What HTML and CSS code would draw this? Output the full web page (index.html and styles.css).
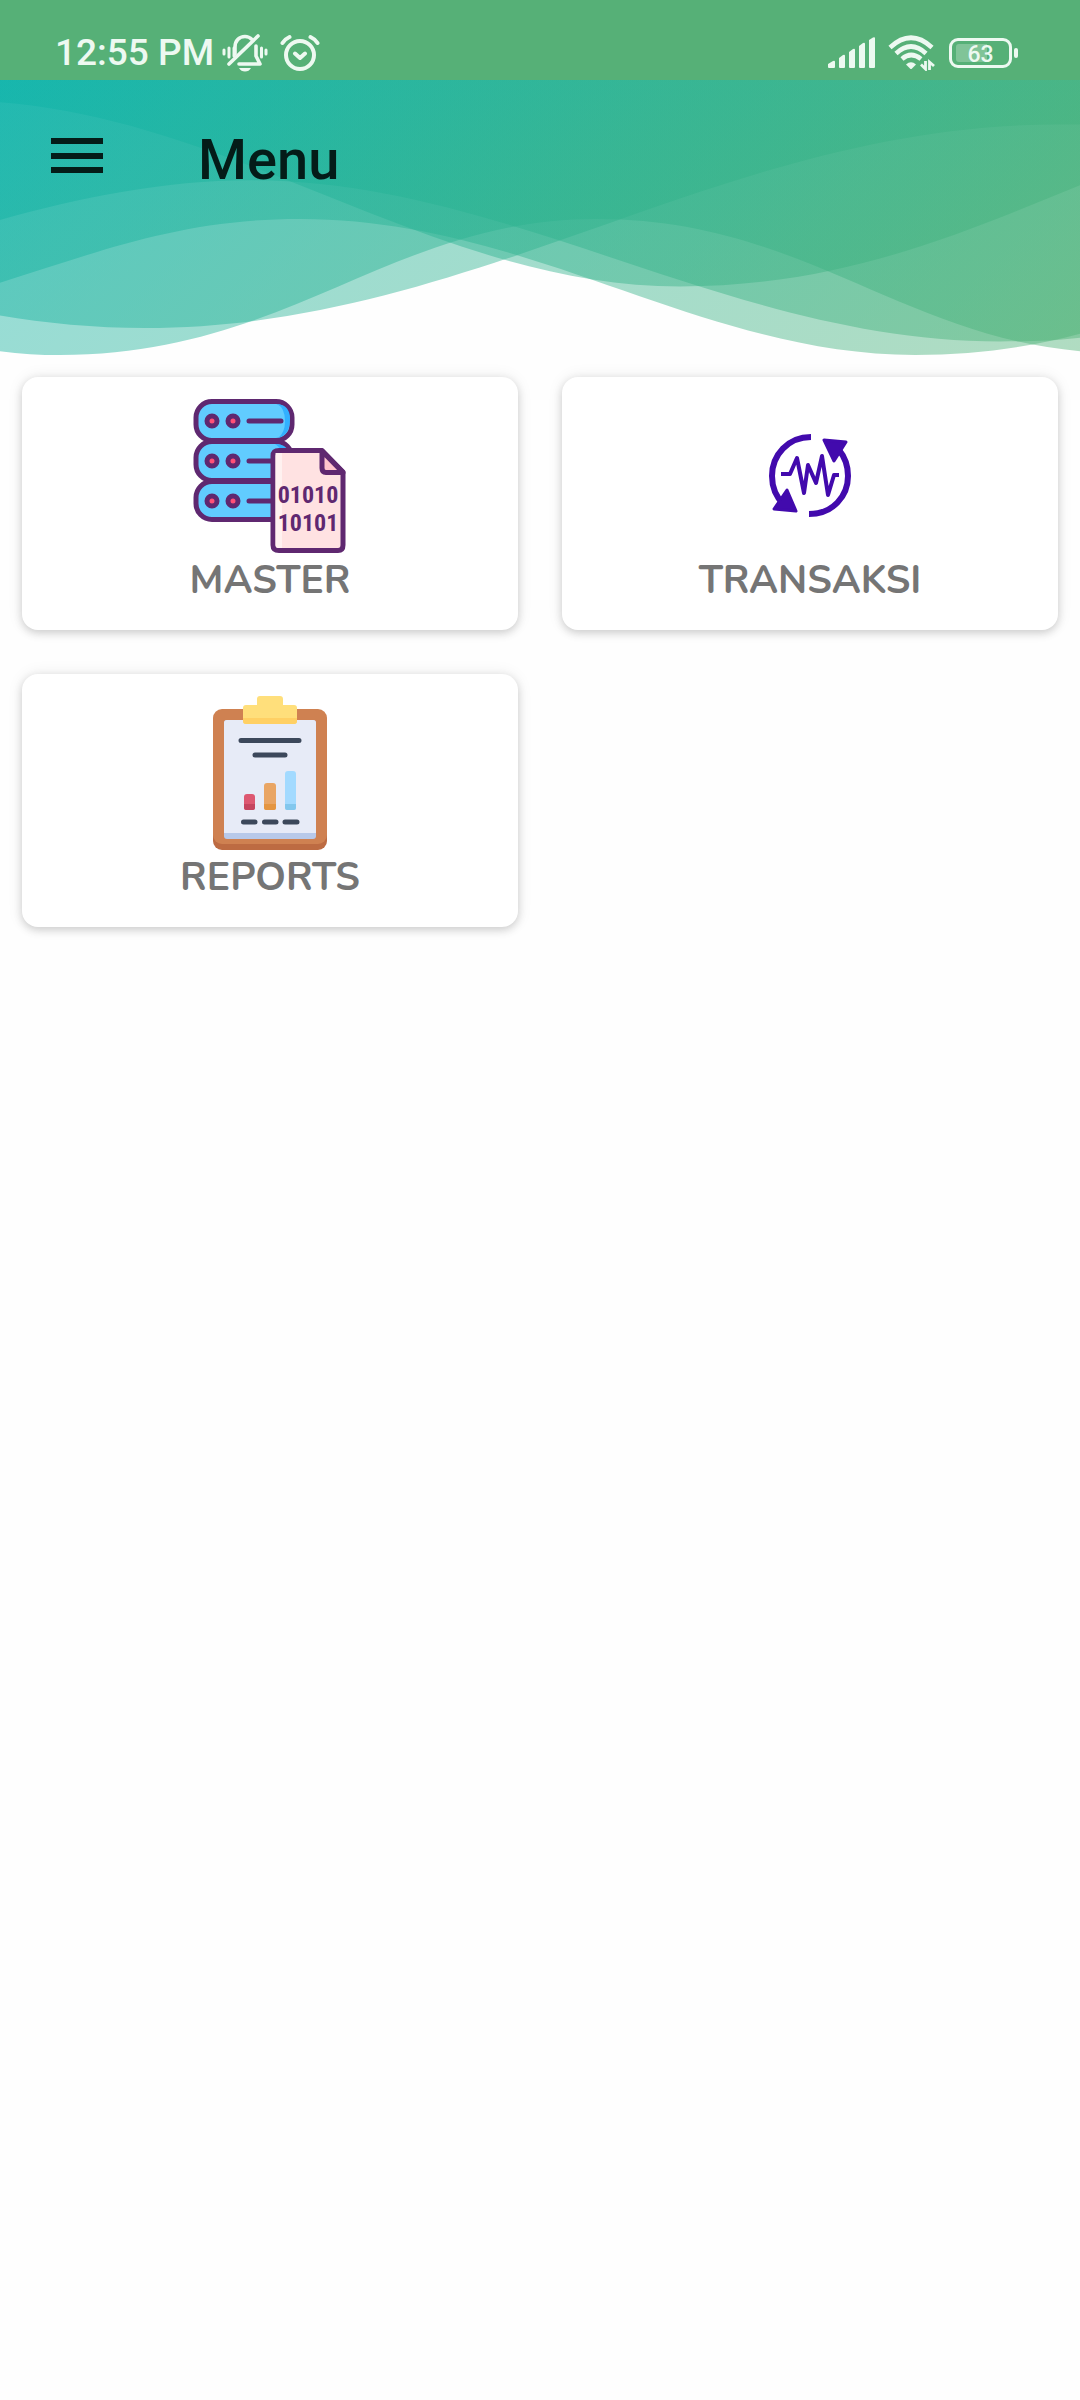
FILE: index.html
```html
<!DOCTYPE html>
<html lang="id">
<head>
<meta charset="utf-8">
<meta name="viewport" content="width=device-width, initial-scale=1">
<title>Menu</title>
<link rel="stylesheet" href="styles.css">
</head>
<body>
<div class="status-bar">
  <div class="status-group">
    <span class="clock">12:55 PM</span>
    <svg class="icon-bell" viewBox="0 0 46 40" aria-hidden="true">
      <g fill="none" stroke="currentColor" stroke-width="3.6" stroke-linecap="round" stroke-linejoin="round">
        <path d="M13 21V14C13 8 17 3.500 23 3.500C25.500 3.500 28 4.500 30 6.500"/>
        <path d="M34 13V23L38 31H17"/>
        <path d="M7 31L36 3"/>
        <path stroke-width="3" d="M2 17V21M7 15V24M39.500 15V24M44 17V21"/>
        <path stroke-width="3" d="M12 15V23"/>
      </g>
      <path d="M17 35H29Q27 38.500 23 38.500Q19 38.500 17 35Z" fill="currentColor"/>
    </svg>
    <svg class="icon-alarm" viewBox="0 0 40 40" aria-hidden="true">
      <g fill="none" stroke="currentColor" stroke-width="4" stroke-linecap="round" stroke-linejoin="round">
        <circle cx="20" cy="22" r="14"/>
        <path d="M15 20.500L20 25L25 20.500M2.500 10Q5 6 9.500 4M37.500 10Q35 6 30.500 4"/>
      </g>
    </svg>
  </div>
  <div class="status-group">
    <svg class="icon-signal" viewBox="0 0 48 32" aria-hidden="true">
      <path fill="currentColor" d="M0 27L5 24Q7 23 7 25V30Q7 31 6 31H1Q0 31 0 30ZM11 21L15 18Q17 17 17 19V30Q17 31 16 31H12Q11 31 11 30ZM21 15L25 12Q27 11 27 13V30Q27 31 26 31H22Q21 31 21 30ZM31 9L35 6Q37 5 37 7V30Q37 31 36 31H32Q31 31 31 30ZM41 3L45 0.500Q47 0 47 1V30Q47 31 46 31H42Q41 31 41 30Z"/>
    </svg>
    <svg class="icon-wifi" viewBox="0 0 48 36" aria-hidden="true">
      <g fill="none" stroke="currentColor" stroke-width="4.600">
        <path d="M2 12.500Q23 -7 44 12.500"/>
        <path d="M8 18.500Q23 4.500 38 18.500"/>
        <path d="M14 24Q23 16 33 24"/>
      </g>
      <path fill="currentColor" d="M18 29.500Q23 25 28 29.500L24 33.500Q23 34.500 22 33.500Z"/>
      <path fill="none" stroke="currentColor" stroke-width="2.800" d="M37.500 26V34L33 29.500M41.500 35V27L46 31"/>
    </svg>
    <span class="battery"><span class="battery-level">63</span></span>
  </div>
</div>

<header class="app-bar">
  <svg class="waves" viewBox="0 80 1080 285" preserveAspectRatio="none" aria-hidden="true">
    <defs>
      <linearGradient id="wave" gradientUnits="userSpaceOnUse" x1="0" y1="80" x2="682" y2="762">
        <stop offset="0" stop-color="#0ab2a9"/>
        <stop offset="1" stop-color="#4db174"/>
      </linearGradient>
    </defs>
    <g fill="url(#wave)" fill-opacity="0.44">
      <path d="M0 80V103C240 122 440 294 680 294C840 294 960 240 1080 189V80Z"/>
      <path d="M0 80V225C80 202 165 184 250 184C510 184 730 351 1000 351C1030 351 1055 350 1080 347V80Z"/>
      <path d="M0 80V290C100 258 180 224 300 224C530 224 700 365 915 365C975 365 1030 357 1080 343V80Z"/>
      <path d="M0 80V324C45 332 95 337 145 337C480 337 720 126 1060 126H1080V80Z"/>
      <path d="M0 80V361C20 364 40 365 60 365C290 365 390 224 597 224C800 224 900 345 1080 361V80Z"/>
    </g>
  </svg>
  <div class="toolbar">
    <button class="menu-button" type="button" aria-label="Menu">
      <svg viewBox="0 0 52 36" aria-hidden="true"><path fill="currentColor" d="M0 0H52V6H0ZM0 15H52V21H0ZM0 29H52V35H0Z"/></svg>
    </button>
    <h1 class="title">Menu</h1>
  </div>
</header>

<main class="cards">
  <button class="card" type="button">
    <svg class="card-icon" viewBox="0 0 154 154" aria-hidden="true">
      <g stroke="#5f2870" stroke-width="5">
        <g fill="#61ccff">
          <rect x="3" y="2.500" width="96" height="39" rx="16"/>
          <rect x="3" y="42.500" width="96" height="39" rx="16"/>
          <rect x="3" y="82.500" width="96" height="38" rx="16"/>
        </g>
        <path fill="#32b0ff" stroke="none" d="M84 5Q97 6 97 20Q97 36 85 39Q92 34 92 22Q92 9 84 5ZM82 45Q93 45 96 53H89Q87 48 82 45Z"/>
        <g fill="#ff5078">
          <circle cx="19" cy="22" r="5"/><circle cx="40" cy="22" r="5"/>
          <circle cx="19" cy="62" r="5"/><circle cx="40" cy="62" r="5"/>
          <circle cx="19" cy="102" r="5"/><circle cx="40" cy="102" r="5"/>
        </g>
        <path fill="none" stroke-linecap="round" d="M56 22H88M56 62H80M56 102H80"/>
        <path fill="#ffe2e2" stroke-linejoin="round" d="M86 51.500H129L150 73V146Q150 151.500 145 151.500H86Q80 151.500 80 146V57Q80 51.500 86 51.500Z"/>
        <path fill="#fff1f0" stroke="none" d="M82.500 54H89V149H85Q82.500 149 82.500 146Z"/>
        <path fill="#ffc4cd" stroke-linejoin="round" d="M129 52V69Q129 73.500 133 73.500H150Z"/>
      </g>
      <text class="binary" x="115" y="104">01010</text>
      <text class="binary" x="115" y="132">10101</text>
    </svg>
    <span class="card-label">MASTER</span>
  </button>

  <button class="card" type="button">
    <svg class="card-icon" viewBox="0 0 154 154" aria-hidden="true">
      <g fill="none" stroke="#420aad" stroke-width="6">
        <path d="M78 38C55 38 39 56 39 77C39 89 43 98 51 106M76 115C100 115 115 97 115 77C115 67 111 57 106 51"/>
        <path stroke-width="4" stroke-linejoin="round" d="M48 75H57L64 59L71 94L75 66L83 84L89 57L95 96L101 76H106"/>
      </g>
      <path fill="#420aad" stroke="#420aad" stroke-width="3" stroke-linejoin="round" d="M91 41L113 43L101 62ZM41 110L54 91L63 112Z"/>
    </svg>
    <span class="card-label">TRANSAKSI</span>
  </button>

  <button class="card" type="button">
    <svg class="card-icon" viewBox="0 0 154 154" aria-hidden="true">
      <rect x="20" y="20" width="114" height="134" rx="9" fill="#bd6b42"/>
      <rect x="20" y="13" width="114" height="135" rx="9" fill="#cf8151"/>
      <rect x="31" y="24" width="92" height="119" rx="3" fill="#b8c9e9"/>
      <path d="M34 24H120Q123 24 123 27V137H31V27Q31 24 34 24Z" fill="#e7ebf7"/>
      <path d="M64 9V3Q64 0 67 0H87Q90 0 90 3V9H101Q104 9 104 12V25Q104 28 101 28H53Q50 28 50 25V12Q50 9 53 9Z" fill="#ffdf7b"/>
      <path d="M50 22H104V25Q104 28 101 28H53Q50 28 50 25Z" fill="#ffd064"/>
      <path d="M48 44.500H106M62 59H92M50.500 126H62M71.500 126H83M92 126H104" stroke="#3c485b" stroke-width="5" stroke-linecap="round"/>
      <rect x="51" y="98" width="11" height="16" rx="3" fill="#dd5871"/>
      <path d="M51 108H62V112Q62 114 60 114H53Q51 114 51 112Z" fill="#c5455f"/>
      <rect x="71" y="87" width="12" height="27" rx="3" fill="#e9a564"/>
      <path d="M71 108H83V112Q83 114 81 114H73Q71 114 71 112Z" fill="#e49541"/>
      <rect x="92" y="75" width="11" height="39" rx="3" fill="#a3daff"/>
      <path d="M92 108H103V112Q103 114 101 114H94Q92 114 92 112Z" fill="#83c7ed"/>
    </svg>
    <span class="card-label">REPORTS</span>
  </button>
</main>
</body>
</html>
```
FILE: styles.css
```css
* {
  box-sizing: border-box;
}

body {
  margin: 0;
  background: #fefefe;
  font-family: Roboto, "Liberation Sans", sans-serif;
}

svg {
  display: block;
}

button {
  border: 0;
  padding: 0;
  font: inherit;
  cursor: pointer;
}

.status-bar {
  display: flex;
  justify-content: space-between;
  height: 80px;
  padding: 25px 68px 0 55px;
  background: #56b077;
  color: #edf9f1;
}

.status-group {
  display: flex;
  align-items: center;
  height: 55px;
}

.clock {
  font-size: 37px;
  font-weight: 500;
  line-height: 55px;
}

.icon-bell {
  width: 46px;
  height: 40px;
  margin-left: 8px;
}

.icon-alarm {
  width: 40px;
  height: 40px;
  margin-left: 12px;
}

.icon-signal {
  width: 48px;
  height: 32px;
}

.icon-wifi {
  width: 48px;
  height: 36px;
  margin-left: 12px;
}

.battery {
  position: relative;
  width: 63px;
  height: 30px;
  margin-left: 13px;
  border: 3px solid currentColor;
  border-radius: 9px;
}

.battery::after {
  content: "";
  position: absolute;
  top: 7px;
  right: -9px;
  width: 4px;
  height: 10px;
  border-radius: 2px;
  background: currentColor;
}

.battery-level {
  display: block;
  height: 18px;
  margin: 3px 4px;
  border-radius: 3px;
  background: linear-gradient(to right, #80c498 63%, transparent 63%);
  font-size: 23px;
  font-weight: 500;
  line-height: 22px;
  text-align: center;
}

.app-bar {
  position: relative;
  height: 275px;
}

.waves {
  position: absolute;
  inset: 0;
  width: 100%;
  height: 100%;
}

.toolbar {
  position: relative;
  display: flex;
  align-items: center;
  gap: 95px;
  height: 152px;
  padding: 0 51px;
  color: #041c18;
}

.menu-button {
  width: 52px;
  background: none;
  color: inherit;
}

.title {
  margin: 0;
  padding-top: 8px;
  font-size: 56px;
  font-weight: 500;
  line-height: 64px;
}

.cards {
  display: grid;
  grid-template-columns: 1fr 1fr;
  gap: 44px;
  padding: 22px;
}

.card {
  display: flex;
  flex-direction: column;
  align-items: center;
  padding: 22px;
  border-radius: 16px;
  background: #fff;
  box-shadow: 0 3px 8px rgba(0, 0, 0, 0.16), 0 0 16px rgba(0, 0, 0, 0.08);
}

.card-icon {
  width: 154px;
  height: 154px;
}

.card-label {
  color: #757575;
  font-family: Nunito, "Open Sans", sans-serif;
  font-size: 39px;
  font-weight: 700;
  line-height: 55px;
}

.binary {
  fill: #5f2870;
  font-family: "Liberation Sans Narrow", "Roboto Condensed", Roboto, sans-serif;
  font-size: 24px;
  font-weight: 700;
  text-anchor: middle;
}
```
